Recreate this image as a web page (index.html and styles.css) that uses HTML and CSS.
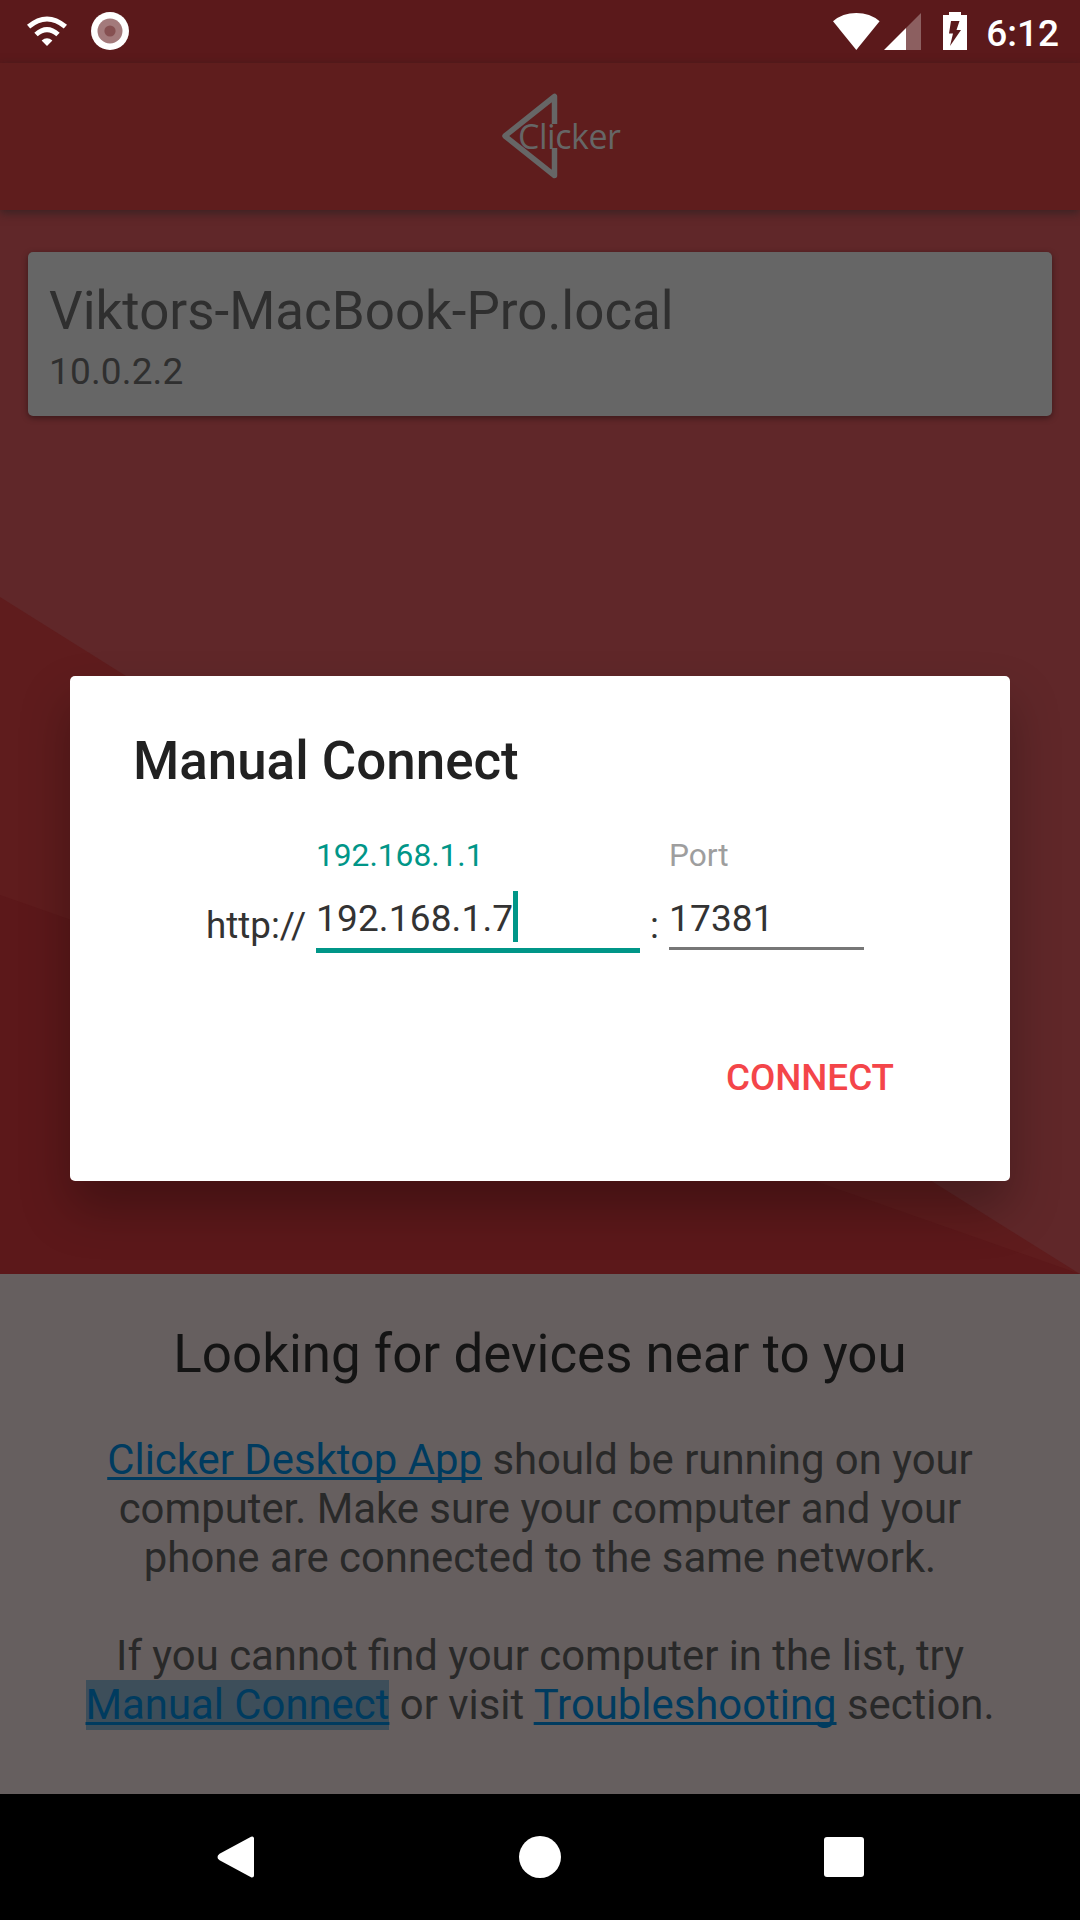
FILE: index.html
```html
<!DOCTYPE html>
<html lang="en">
<head>
<meta charset="utf-8">
<title>Clicker</title>
<link rel="stylesheet" href="styles.css">
</head>
<body>
<div class="screen">
  <header class="status-bar">
    <div class="status-left">
      <svg class="icon-wifi-small" width="42" height="31" viewBox="0 0 42 31">
        <path d="M2.6 10.700Q21 -4.700 39.4 10.700" fill="none" stroke="#fff" stroke-width="5"/>
        <path d="M10 18.500Q21 8.600 32 18.500" fill="none" stroke="#fff" stroke-width="5"/>
        <path d="M15.6 24.500Q21 20.100 26.4 24.500L21 30.100Z" fill="#fff"/>
      </svg>
      <svg class="icon-record" width="38" height="38" viewBox="0 0 38 38">
        <circle cx="19" cy="19" r="19" fill="#fff"/>
        <circle cx="19" cy="19" r="12.5" fill="#a37a7b"/>
        <circle cx="19" cy="19" r="5.6" fill="#865051"/>
      </svg>
    </div>
    <div class="status-right">
      <svg class="icon-wifi" width="47" height="37" viewBox="0 0 47 37">
        <path d="M0 8.2Q9.500 0 23.300 0T46.600 8.200L23.300 37Z" fill="#fff"/>
      </svg>
      <svg class="icon-signal" width="37" height="37" viewBox="0 0 37 37">
        <path d="M37 0V37H22V15Z" fill="#8c5f60"/>
        <path d="M22 15V37H0Z" fill="#fff"/>
      </svg>
      <svg class="icon-battery" width="24" height="38" viewBox="0 0 24 38">
        <path d="M6 0H18V3H24V38H0V3H6Z" fill="#fff"/>
        <path d="M8 9H16.500L13.500 18H18L7 34L10 21.500H6Z" fill="#5b191b"/>
      </svg>
      <span class="clock">6:12</span>
    </div>
  </header>

  <div class="app-bar">
    <svg class="logo" width="124" height="88" viewBox="0 0 124 88">
      <path d="M54.500 4.500V83.500L5 44Z" fill="none" stroke="#666" stroke-width="5.500" stroke-linejoin="round"/>
      <path d="M50 32H59V56H50Z" fill="#5f1d1d"/>
      <text class="logo-text" x="18" y="56.500" textLength="103">Clicker</text>
    </svg>
  </div>

  <main class="content">
    <svg class="backdrop" width="1080" height="1064" viewBox="0 0 1080 1064">
      <path d="M0 387L1080 1064H0Z" fill="#5f1c1d"/>
      <path d="M0 685L1080 1064H0Z" fill="#5c181a"/>
    </svg>
    <article class="device">
      <h2 class="device-name">Viktors-MacBook-Pro.local</h2>
      <p class="device-ip">10.0.2.2</p>
    </article>
  </main>

  <section class="help">
    <h1 class="help-title">Looking for devices near to you</h1>
    <p class="help-text"><a class="link">Clicker Desktop App</a> should be running on your<br>computer. Make sure your computer and your<br>phone are connected to the same network.</p>
    <p class="help-text">If you cannot find your computer in the list, try<br><a class="link link-pressed">Manual Connect</a> or visit <a class="link">Troubleshooting</a> section.</p>
  </section>

  <nav class="nav-bar">
    <svg width="42" height="44" viewBox="0 0 42 44"><path d="M5.500 20.500L37 3.500V40.500L5.500 23.500Q3.500 22 5.500 20.500Z" fill="#fff" stroke="#fff" stroke-width="4" stroke-linejoin="round"/></svg>
    <svg width="42" height="44" viewBox="0 0 42 44"><circle cx="21" cy="22" r="21" fill="#fff"/></svg>
    <svg width="42" height="44" viewBox="0 0 42 44"><rect x="1" y="2" width="40" height="40" rx="3" fill="#fff"/></svg>
  </nav>

  <div class="dialog" role="dialog">
    <h2 class="dialog-title">Manual Connect</h2>
    <div class="form-row">
      <span class="affix scheme">http://</span>
      <div class="field field-host">
        <span class="label">192.168.1.1</span>
        <span class="value">192.168.1.7<i class="caret"></i></span>
      </div>
      <span class="affix colon">:</span>
      <div class="field field-port">
        <span class="label">Port</span>
        <span class="value">17381</span>
      </div>
    </div>
    <div class="actions"><button class="connect">CONNECT</button></div>
  </div>
</div>
</body>
</html>
```
FILE: styles.css
```css
* { box-sizing: border-box; margin: 0; padding: 0; }

body { font-family: Roboto, sans-serif; background: #000; }

.screen {
  position: relative;
  display: flex;
  flex-direction: column;
  width: 1080px;
  height: 1920px;
  overflow: hidden;
}

.status-bar {
  display: flex;
  justify-content: space-between;
  height: 63px;
  padding: 12px 21px 0 26px;
  background: #5b191b;
}
.status-left, .status-right { display: flex; align-items: flex-start; }
.icon-wifi-small { margin: 4px 23px 0 0; }
.icon-wifi { margin: 1px 4px 0 0; }
.icon-signal { margin: 1px 22px 0 0; }
.icon-battery { margin-right: 19px; }
.clock {
  font-size: 37px;
  font-weight: 500;
  line-height: 43px;
  color: #fff;
}

.app-bar {
  position: relative;
  z-index: 1;
  height: 147px;
  padding: 29px 0 0 500px;
  background: #5f1d1d;
  box-shadow: 0 3px 9px rgba(20, 30, 30, .5);
}
.logo { display: block; }
.logo-text {
  font-family: "Open Sans", sans-serif;
  font-size: 34px;
  font-weight: 400;
  fill: #666;
}

.content {
  position: relative;
  height: 1064px;
  padding: 42px 28px;
  background: #602729;
}
.backdrop { position: absolute; inset: 0; }
.device {
  position: relative;
  height: 164px;
  padding: 28px 21px;
  border-radius: 5px;
  background: #666;
  color: #2f2f2f;
  box-shadow: 0 2px 6px rgba(0, 0, 0, .4);
}
.device-name { font-size: 52.9px; font-weight: 400; line-height: 62px; }
.device-ip { margin-top: 8px; font-size: 37px; line-height: 43px; letter-spacing: .15px; }

.help {
  height: 520px;
  padding-top: 49px;
  background: #665f5f;
  text-align: center;
}
.help-title { font-size: 52.9px; font-weight: 400; line-height: 62px; color: #141414; }
.help-text {
  margin-top: 49px;
  font-size: 41.85px;
  line-height: 49px;
  color: #292929;
}
.help-title + .help-text { margin-top: 50px; }
.link {
  color: #003b5f;
  text-decoration: underline;
  text-decoration-thickness: 3px;
  text-underline-offset: 3px;
  text-decoration-skip-ink: none;
}
.link-pressed { padding-bottom: 1px; background: #3d4e5a; }

.nav-bar {
  display: flex;
  justify-content: space-between;
  align-items: center;
  height: 126px;
  padding: 0 215px;
  background: #000;
}

.dialog {
  position: absolute;
  z-index: 2;
  left: 70px;
  top: 676px;
  width: 940px;
  height: 505px;
  padding: 54px 63px;
  border-radius: 5px;
  background: #fff;
  color: #333;
  box-shadow: 0 27px 50px rgba(0, 0, 0, .28);
}
.dialog-title { font-size: 52.9px; font-weight: 500; line-height: 62px; color: #212121; }
.form-row {
  display: flex;
  align-items: flex-start;
  margin-top: 45px;
  padding-left: 73px;
}
.affix { padding-top: 67px; font-size: 36.75px; line-height: 43px; }
.scheme { width: 110px; }
.colon { width: 19px; margin-left: 10px; }
.field { display: flex; flex-direction: column; height: 116px; }
.label { font-size: 31.7px; line-height: 37px; }
.value {
  display: flex;
  align-items: center;
  height: 51px;
  margin-top: 17px;
  padding-top: 3px;
  font-size: 37px;
  line-height: 43px;
  letter-spacing: .15px;
}
.field-host { width: 324px; border-bottom: 5px solid #009688; }
.field-host .label { color: #009688; }
.field-port { width: 195px; height: 113px; border-bottom: 3px solid #777; }
.field-port .label { color: #9e9e9e; }
.caret { width: 5px; height: 51px; margin-top: -3px; background: #009688; }
.actions { display: flex; justify-content: flex-end; margin-top: 103px; padding-right: 53px; }
.connect {
  border: 0;
  background: none;
  font: 500 36.75px/43px Roboto, sans-serif;
  color: #f44549;
}
```
